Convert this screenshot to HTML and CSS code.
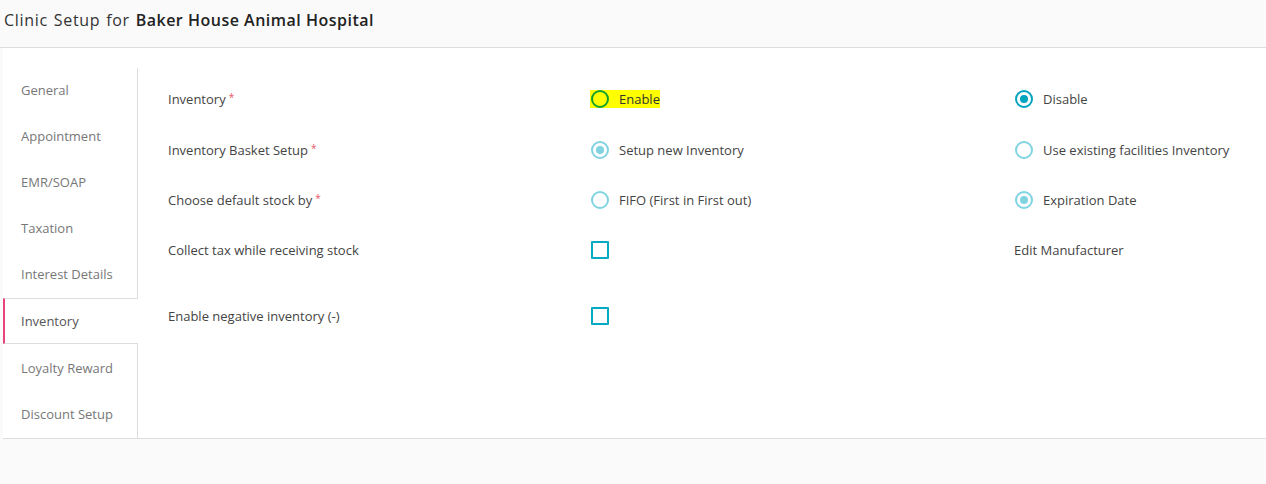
FILE: index.html
```html
<!DOCTYPE html>
<html lang="en">
<head>
    <meta charset="UTF-8">
    <title>Clinic Setup</title>
    <link rel="stylesheet" href="styles.css">
</head>
<body>
    <div class="page-header">
        <h1>Clinic Setup for <b>Baker House Animal Hospital</b></h1>
    </div>

    <div class="setup">
        <ul class="side-nav">
            <li>General</li>
            <li>Appointment</li>
            <li>EMR/SOAP</li>
            <li>Taxation</li>
            <li>Interest Details</li>
            <li class="active">Inventory</li>
            <li>Loyalty Reward</li>
            <li>Discount Setup</li>
        </ul>

        <div class="form">
            <div class="row">
                <div class="label">Inventory<span class="req">*</span></div>
                <div class="opt marked"><span class="radio"></span>Enable</div>
                <div class="opt"><span class="radio on dark"></span>Disable</div>
            </div>
            <div class="row">
                <div class="label">Inventory Basket Setup<span class="req">*</span></div>
                <div class="opt"><span class="radio on"></span>Setup new Inventory</div>
                <div class="opt"><span class="radio"></span>Use existing facilities Inventory</div>
            </div>
            <div class="row">
                <div class="label">Choose default stock by<span class="req">*</span></div>
                <div class="opt"><span class="radio"></span>FIFO (First in First out)</div>
                <div class="opt"><span class="radio on"></span>Expiration Date</div>
            </div>
            <div class="row">
                <div class="label">Collect tax while receiving stock</div>
                <div class="opt"><span class="check"></span></div>
                <div class="opt">Edit Manufacturer</div>
            </div>
            <div class="row last">
                <div class="label">Enable negative inventory (-)</div>
                <div class="opt"><span class="check"></span></div>
                <div class="opt"></div>
            </div>
        </div>
    </div>
</body>
</html>
```

FILE: styles.css
```css
body {
    margin: 0;
    font-family: "Open Sans", sans-serif;
    font-size: 13px;
    color: #444;
    background: #fafafa;
}
.page-header {
    height: 47px;
    border-bottom: 1px solid #ddd;
    background: #fafafa;
    display: flex;
    align-items: center;
    padding-left: 4px;
}
.page-header h1 {
    margin: 0 0 8px;
    font-size: 16px;
    font-weight: normal;
    letter-spacing: 0.7px;
    word-spacing: 1px;
    color: #333;
}
.page-header b {
    font-weight: 600;
    letter-spacing: 0.5px;
    word-spacing: 0;
    color: #222;
}
.setup {
    display: flex;
    margin-left: 3px;
    padding-top: 20px;
    height: 370px;
    background: #fff;
    border-bottom: 1px solid #ddd;
}
.side-nav {
    list-style: none;
    margin: 0 0 -2px;
    padding: 0;
    width: 134px;
    flex-shrink: 0;
    border-right: 1px solid #ddd;
}
.side-nav li {
    height: 46px;
    line-height: 45px;
    padding-left: 18px;
    color: #777;
}
.side-nav li.active {
    height: 44px;
    line-height: 44px;
    padding-left: 16px;
    margin-right: -1px;
    background: #fff;
    border-top: 1px solid #ddd;
    border-bottom: 1px solid #ddd;
    border-left: 2px solid #e8457f;
    color: #555;
}
.side-nav li.active ~ li {
    line-height: 48px;
}
.form {
    flex: 1;
    padding: 6px 0 0 30px;
}
.row {
    display: grid;
    grid-template-columns: 422px 424px 1fr;
    height: 50px;
    align-items: center;
}
.row:nth-child(2) {
    margin-top: 1px;
}
.row.last {
    margin-top: 16px;
}
.label {
    color: #444;
}
.req {
    color: #e5586a;
    font-size: 10px;
    vertical-align: top;
    margin-left: 3px;
}
.opt {
    display: flex;
    align-items: center;
    gap: 10px;
    color: #444;
}
.radio {
    box-sizing: border-box;
    width: 18px;
    height: 18px;
    border: 2px solid #82d3e1;
    border-radius: 50%;
    display: flex;
    align-items: center;
    justify-content: center;
    margin-left: 1px;
}
.radio.on::after {
    content: "";
    width: 8px;
    height: 8px;
    border-radius: 50%;
    background: #82d3e1;
}
.radio.dark {
    border-color: #02a4bf;
}
.radio.dark::after {
    background: #02a4bf;
}
.opt.marked {
    width: 70px;
    height: 18px;
    background: #ffff00;
    color: #333;
}
.opt.marked .radio {
    border-color: #14a02c;
    background: #ffff00;
}
.check {
    box-sizing: border-box;
    width: 18px;
    height: 18px;
    border: 2px solid #05a9c1;
    border-radius: 1px;
    margin-left: 1px;
}
```
